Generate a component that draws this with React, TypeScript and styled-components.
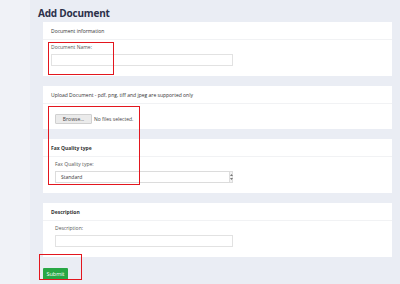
import styled, { createGlobalStyle } from "styled-components";

const GlobalStyle = createGlobalStyle`
	html, body {
		margin: 0;
		padding: 0;
		background: #eaedf4;
	}
	* {
		box-sizing: border-box;
	}
`;

const Page = styled.div`
	position: relative;
	display: flex;
	width: 400px;
	height: 284px;
	overflow: hidden;
	font-family: "Open Sans", "Liberation Sans", sans-serif;
	color: #3a3a3a;
`;

const SideStrip = styled.div`
	width: 30px;
	flex-shrink: 0;
	background: #f0f2f7;
`;

const Main = styled.main`
	flex: 1;
	display: flex;
	flex-direction: column;
	padding: 4px 8px 0 8px;
	background: #eaedf4;
`;

const Title = styled.h1`
	margin: 0;
	height: 18px;
	font-size: 10px;
	line-height: 18px;
	font-weight: 700;
	color: #2c3049;
	letter-spacing: -0.2px;
`;

const Cards = styled.div`
	display: flex;
	flex-direction: column;
	gap: 10px;
	margin-left: 5px;
	width: 349px;
`;

const Card = styled.section`
	background: #ffffff;
`;

const CardHeader = styled.div<{ $bold?: boolean }>`
	height: 18px;
	display: flex;
	align-items: center;
	padding: 0 8px;
	font-size: 5px;
	font-weight: ${(p) => (p.$bold ? 700 : 400)};
	color: #333;
	border-bottom: 1px solid #f1f2f4;
`;

const CardBody = styled.div<{ $indent: number; $top: number; $bottom: number }>`
	display: flex;
	flex-direction: column;
	padding: ${(p) => `${p.$top}px 0 ${p.$bottom}px ${p.$indent}px`};
`;

const Label = styled.label`
	font-size: 5px;
	line-height: 8px;
	color: #555;
	margin-bottom: 3px;
`;

const TextBox = styled.div<{ $width: number }>`
	width: ${(p) => p.$width}px;
	height: 12px;
	border: 1px solid #e2e2e2;
	background: #fff;
`;

const FileRow = styled.div`
	display: flex;
	align-items: center;
	gap: 2px;
	font-size: 5px;
	color: #444;
`;

const BrowseButton = styled.div`
	width: 37px;
	height: 10px;
	display: flex;
	align-items: center;
	justify-content: center;
	background: #ebebeb;
	border: 1px solid #d0d0d0;
	border-radius: 1px;
	font-size: 5px;
	color: #444;
`;

const SelectBox = styled.div`
	width: 178px;
	height: 12px;
	display: flex;
	align-items: center;
	justify-content: space-between;
	padding-left: 5px;
	border: 1px solid #dcdcdc;
	font-size: 5px;
	color: #333;
`;

const Spinner = styled.div`
	width: 3px;
	height: 10px;
	display: flex;
	flex-direction: column;
	justify-content: center;
	align-items: center;
	background: #f2f2f2;
	border-left: 1px solid #ddd;
`;

const SubmitButton = styled.button`
	margin: 11px 0 0 5px;
	width: 25px;
	height: 12px;
	padding: 0;
	border: none;
	background: #28a745;
	color: #fff;
	font-family: "Open Sans", "Liberation Sans", sans-serif;
	font-size: 5.5px;
	border-radius: 1px;
`;

const Highlight = styled.div<{ $x: number; $y: number; $w: number; $h: number }>`
	position: absolute;
	left: ${(p) => p.$x}px;
	top: ${(p) => p.$y}px;
	width: ${(p) => p.$w}px;
	height: ${(p) => p.$h}px;
	border: 1.5px solid #e3161e;
	pointer-events: none;
`;

export default function App() {
	return (
		<>
			<GlobalStyle />
			<Page>
				<SideStrip />
				<Main>
					<Title>Add Document</Title>
					<Cards>
						<Card>
							<CardHeader>Document information</CardHeader>
							<CardBody $indent={8} $top={3} $bottom={10}>
								<Label>Document Name:</Label>
								<TextBox $width={182} />
							</CardBody>
						</Card>
						<Card>
							<CardHeader>Upload Document - pdf, png, tiff and jpeg are supported only</CardHeader>
							<CardBody $indent={12} $top={10} $bottom={5}>
								<FileRow>
									<BrowseButton>Browse...</BrowseButton>
									<span>No files selected.</span>
								</FileRow>
							</CardBody>
						</Card>
						<Card>
							<CardHeader $bold>Fax Quality type</CardHeader>
							<CardBody $indent={12} $top={3} $bottom={10}>
								<Label>Fax Quality type:</Label>
								<SelectBox>
									<span>Standard</span>
									<Spinner>
										<svg width="3" height="8" viewBox="0 0 3 8">
											<path d="M0 3 L1.5 1 L3 3 Z M0 5 L1.5 7 L3 5 Z" fill="#777" />
										</svg>
									</Spinner>
								</SelectBox>
							</CardBody>
						</Card>
						<Card>
							<CardHeader $bold>Description</CardHeader>
							<CardBody $indent={12} $top={3} $bottom={10}>
								<Label>Description:</Label>
								<TextBox $width={178} />
							</CardBody>
						</Card>
					</Cards>
					<SubmitButton>Submit</SubmitButton>
				</Main>
				<Highlight $x={48} $y={42} $w={66} $h={33} />
				<Highlight $x={48} $y={106} $w={92} $h={79} />
				<Highlight $x={39} $y={254} $w={43} $h={26} />
			</Page>
		</>
	);
}
